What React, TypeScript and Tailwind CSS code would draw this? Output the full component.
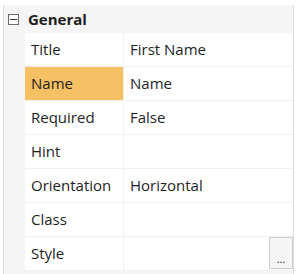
import React from "react";

const rows: { name: string; value: string; selected?: boolean; button?: boolean }[] = [
  { name: "Title", value: "First Name" },
  { name: "Name", value: "Name", selected: true },
  { name: "Required", value: "False" },
  { name: "Hint", value: "" },
  { name: "Orientation", value: "Horizontal" },
  { name: "Class", value: "" },
  { name: "Style", value: "", button: true },
];

export default function App() {
  return (
    <div
      className="w-[296px] h-[274px] bg-white pl-[3px] pt-[5px] pr-[2px]"
      style={{ fontFamily: '"Open Sans", "Noto Sans", sans-serif' }}
    >
      <div className="h-[269px] bg-[#f5f5f5] border-l border-r border-[#dcdcdc] flex flex-col">
        <div className="h-[28px] flex items-center pl-[4px]">
          <div className="w-[11px] h-[11px] border border-[#6b6b6b] bg-white flex items-center justify-center">
            <div className="w-[7px] h-px bg-[#333]" />
          </div>
          <span className="ml-[9px] text-[15px] font-bold text-[#1e1e1e] leading-none">General</span>
        </div>
        <div className="ml-[21px] flex flex-col">
          {rows.map((r) => (
            <div key={r.name} className="h-[34px] flex border-b border-[#f0f0f0] bg-white">
              <div
                className={`w-[99px] shrink-0 flex items-center pl-[6px] text-[15px] text-[#1e1e1e] border-r border-[#f0f0f0] ${
                  r.selected ? "bg-[#f6c064]" : "bg-white"
                }`}
              >
                {r.name}
              </div>
              <div className="flex-1 flex items-center pl-[6px] text-[15px] text-[#1e1e1e] relative">
                {r.value}
                {r.button && (
                  <div className="absolute right-0 top-0 w-[24px] h-[32px] border border-[#cccccc] bg-[#f5f5f5] flex items-end justify-center pb-[4px] text-[11px] leading-none text-[#222]">
                    ...
                  </div>
                )}
              </div>
            </div>
          ))}
        </div>
      </div>
    </div>
  );
}
